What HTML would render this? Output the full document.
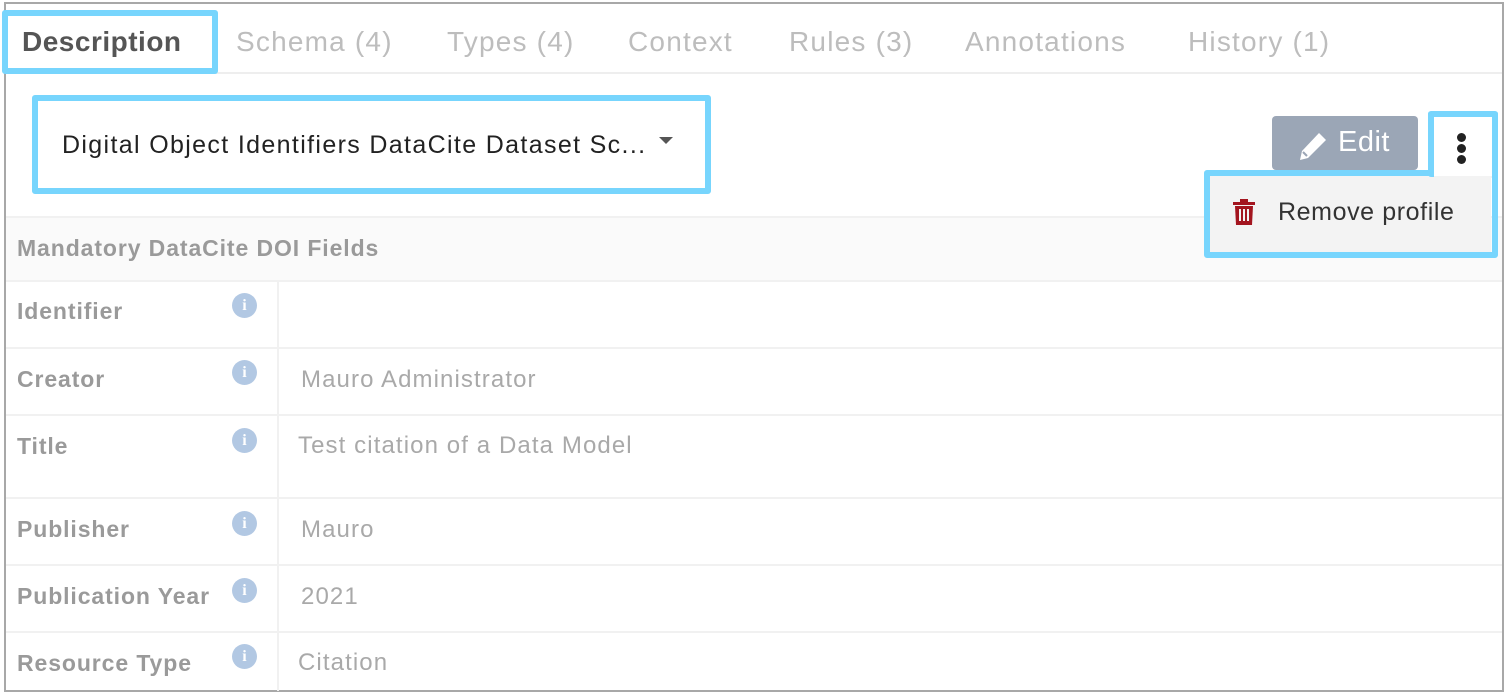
<!DOCTYPE html>
<html><head><meta charset="utf-8"><style>
*{margin:0;padding:0;box-sizing:border-box}
body{width:1506px;height:693px;background:#fff;font-family:"Liberation Sans",sans-serif;position:relative;overflow:hidden}
.a{position:absolute;white-space:nowrap}
.tab{top:24px;font-size:28px;color:#bdbdbd;line-height:36px;letter-spacing:1.2px}
.hl{position:absolute;border:6px solid #77d5fd;border-radius:3px}
.lbl{left:17px;font-size:23px;font-weight:bold;color:#9a9a9a;letter-spacing:0.9px}
.val{font-size:24px;color:#a9a9a9;letter-spacing:1.1px}
.info{position:absolute;left:232px;width:25px;height:25px;border-radius:50%;background:#b2c8e3;color:#fff;font:bold 16px "Liberation Serif",serif;text-align:center;line-height:25px}
.hr{position:absolute;left:6px;right:4px;height:2px;background:#f1f1f1}
</style></head><body>
<div class="a" style="left:4px;top:2px;width:1500px;height:690px;border:2px solid #a8a8a8"></div>
<div class="a" style="left:6px;top:72px;width:1496px;height:2px;background:#eee"></div>
<div class="a tab" style="left:22px;color:#555;font-weight:bold;letter-spacing:0.5px">Description</div>
<div class="a tab" style="left:236px">Schema (4)</div>
<div class="a tab" style="left:447px">Types (4)</div>
<div class="a tab" style="left:628px">Context</div>
<div class="a tab" style="left:789px">Rules (3)</div>
<div class="a tab" style="left:965px">Annotations</div>
<div class="a tab" style="left:1188px">History (1)</div>
<div class="hl" style="left:2px;top:10px;width:216px;height:64px"></div>

<div class="a" style="left:62px;top:131px;font-size:25px;color:#222;letter-spacing:1.35px">Digital Object Identifiers DataCite Dataset Sc...</div>
<div class="a" style="left:659px;top:137px;width:0;height:0;border-left:7px solid transparent;border-right:7px solid transparent;border-top:7px solid #555"></div>
<div class="hl" style="left:32px;top:95px;width:679px;height:99px"></div>

<div class="a" style="left:1272px;top:116px;width:146px;height:54px;background:#9ba6b6;border-radius:4px"></div>
<svg class="a" style="left:1297px;top:130px" width="32" height="32" viewBox="0 0 32 32"><path d="M22 3 L29 10 L11 28 L3 30 L5 21 Z" fill="#fff"/><path d="M6 22 L10 26" stroke="#9ba6b6" stroke-width="2"/></svg>
<div class="a" style="left:1338px;top:126px;font-size:29px;color:#fff;letter-spacing:0.5px">Edit</div>
<div class="a" style="left:1457px;top:133px;width:9px;height:9px;border-radius:50%;background:#222"></div>
<div class="a" style="left:1457px;top:144px;width:9px;height:9px;border-radius:50%;background:#222"></div>
<div class="a" style="left:1457px;top:155px;width:9px;height:9px;border-radius:50%;background:#222"></div>

<div class="a" style="left:6px;top:217px;width:1496px;height:64px;background:#fafafa"></div>
<div class="hr" style="top:216px"></div>
<div class="a lbl" style="top:235px">Mandatory DataCite DOI Fields</div>
<div class="hr" style="top:280px"></div>
<div class="a" style="left:277px;top:281px;width:2px;height:410px;background:#f1f1f1"></div>

<div class="a lbl" style="top:298px">Identifier</div><div class="info" style="top:293px">i</div>
<div class="hr" style="top:347px"></div>
<div class="a lbl" style="top:366px">Creator</div><div class="info" style="top:360px">i</div>
<div class="a val" style="left:301px;top:366px">Mauro Administrator</div>
<div class="hr" style="top:414px"></div>
<div class="a lbl" style="top:433px">Title</div><div class="info" style="top:428px">i</div>
<div class="a val" style="left:298px;top:432px">Test citation of a Data Model</div>
<div class="hr" style="top:497px"></div>
<div class="a lbl" style="top:516px">Publisher</div><div class="info" style="top:511px">i</div>
<div class="a val" style="left:301px;top:516px">Mauro</div>
<div class="hr" style="top:564px"></div>
<div class="a lbl" style="top:583px">Publication Year</div><div class="info" style="top:578px">i</div>
<div class="a val" style="left:301px;top:583px">2021</div>
<div class="hr" style="top:631px"></div>
<div class="a lbl" style="top:650px">Resource Type</div><div class="info" style="top:644px">i</div>
<div class="a val" style="left:298px;top:649px">Citation</div>

<div class="a" style="left:1210px;top:176px;width:281px;height:76px;background:#f3f3f3"></div>
<svg class="a" style="left:1233px;top:199px" width="22" height="26" viewBox="0 0 22 26"><rect x="0" y="3" width="22" height="3" fill="#a3151f"/><rect x="7" y="0" width="8" height="4" fill="#a3151f"/><path d="M2 7 H20 L19 26 H3 Z" fill="#a3151f"/><rect x="6" y="10" width="2" height="12" fill="#f3f3f3"/><rect x="10" y="10" width="2" height="12" fill="#f3f3f3"/><rect x="14" y="10" width="2" height="12" fill="#f3f3f3"/></svg>
<div class="a" style="left:1278px;top:198px;font-size:25px;color:#333;letter-spacing:0.6px">Remove profile</div>
<div class="hl" style="left:1428px;top:111px;width:70px;height:66px;border-bottom:none"></div>
<div class="hl" style="left:1204px;top:170px;width:294px;height:88px"></div>
<div class="a" style="left:1434px;top:168px;width:58px;height:10px;background:#fff"></div>
<div class="a" style="left:1434px;top:176px;width:58px;height:2px;background:#f3f3f3"></div>
</body></html>
